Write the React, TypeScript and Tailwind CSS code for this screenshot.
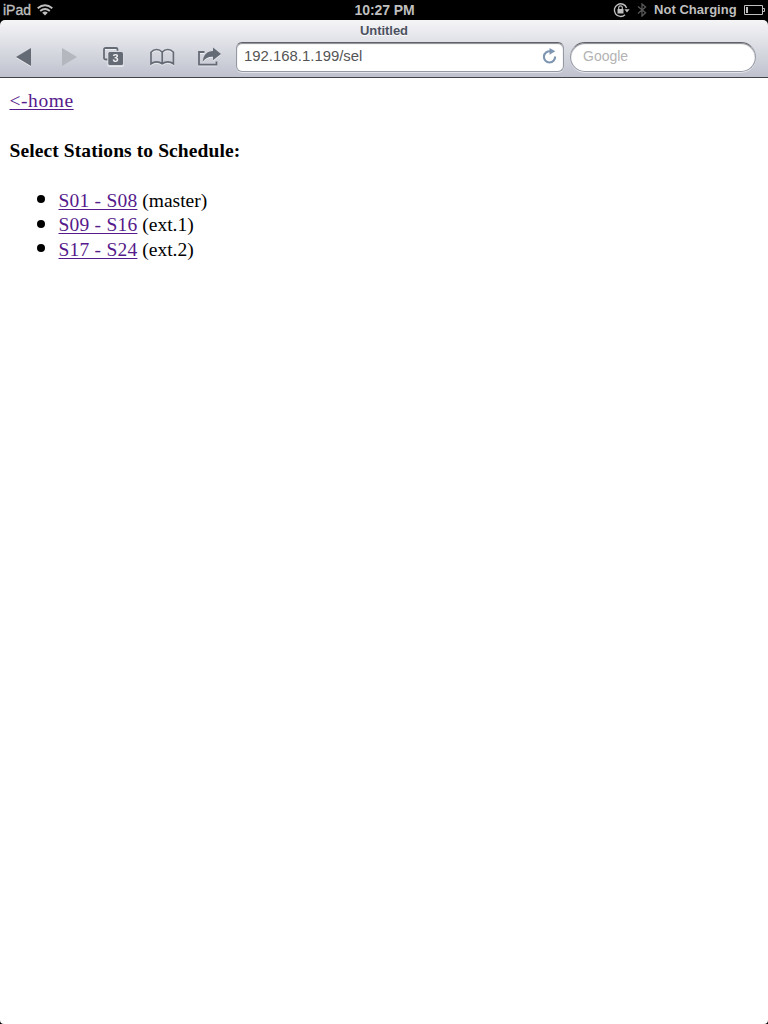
import React from 'react';

const stations = [
  { range: 'S01 - S08', unit: '(master)' },
  { range: 'S09 - S16', unit: '(ext.1)' },
  { range: 'S17 - S24', unit: '(ext.2)' },
];

function StatusBar() {
  return (
    <div className="grid h-5 shrink-0 grid-cols-3 items-center bg-black font-bold text-[#bfbfbf]">
      <div className="flex items-center pl-[3px]">
        <span className="w-[28px] whitespace-nowrap text-[14px] leading-5 font-normal [-webkit-text-stroke:0.35px_#bfbfbf]">iPad</span>
        <svg className="ml-[6px]" width="16" height="12" viewBox="0 0 16 12" fill="none" stroke="#bfbfbf" strokeWidth="1.9">
          <path d="M.7 4.3Q8-2 15.3 4.3M3.2 7Q8 3 12.8 7" />
          <path d="M5.2 8.7Q8 6.4 10.8 8.7L8 11.5Z" fill="#bfbfbf" stroke="none" />
        </svg>
      </div>
      <span className="pl-px text-center text-[14px] leading-5 tracking-[-0.1px]">10:27 PM</span>
      <div className="flex items-center justify-end pr-[3px]">
        <svg width="17" height="16" viewBox="0 0 17 16" fill="none">
          <path d="M13.6 6A6.3 6.3 0 1 0 12 12.7" stroke="#bfbfbf" strokeWidth="1.4" />
          <path d="M11.4 7.3h5.2L14 10.6Z" fill="#bfbfbf" />
          <path d="M4.5 7h6v4.5h-6Z" fill="#bfbfbf" />
          <path d="M5.7 7.5V5.6a1.8 1.8 0 0 1 3.6 0v1.9" stroke="#bfbfbf" strokeWidth="1.2" />
        </svg>
        <svg className="ml-[7px]" width="10" height="14" viewBox="0 0 10 14" fill="none" stroke="#595959" strokeWidth="1.3">
          <path d="m1 3.6 7.6 6.2L5 13V1l3.6 3.1L1 10.4" />
        </svg>
        <span className="ml-[7px] w-[83px] whitespace-nowrap text-[13px] leading-5 tracking-[0.03px]">Not Charging</span>
        <svg className="ml-[7px]" width="21" height="10" viewBox="0 0 21 10" fill="none">
          <path d="M.5.5h18v9H.5ZM18.5 3.5h2v3h-2" stroke="#bfbfbf" />
          <path d="M2 2h2v6H2Z" fill="#bfbfbf" />
        </svg>
      </div>
    </div>
  );
}

function Toolbar() {
  return (
    <div className="bg-black">
      <header className="h-[58px] rounded-t-[5px] border-b border-[#434347] bg-linear-to-b from-[#f5f5f7] to-[#bfc2ce]">
        <div className="h-[21px] text-center text-[13px] leading-[21px] font-bold tracking-[-0.05px] text-[#4b5060] [text-shadow:0_1px_0_white]">Untitled</div>
        <div className="flex h-[31px] items-center">
          <svg className="ml-4 shrink-0 drop-shadow-[0_1px_0_#ffffff90]" width="16" height="18" viewBox="0 0 16 18">
            <path d="M0 9 15 0v18Z" fill="#656b75" />
          </svg>
          <svg className="ml-[30px] shrink-0" width="16" height="18" viewBox="0 0 16 18">
            <path d="m0 0 15 9-15 9Z" fill="#b4b7be" />
          </svg>
          <div className="ml-[25px] grid shrink-0 items-center drop-shadow-[0_1px_0_#ffffff90]">
            <svg className="col-start-1 row-start-1" width="21" height="19" viewBox="0 0 21 19">
              <rect x="1" y="1" width="13.5" height="11.5" rx="1.5" fill="none" stroke="#656b75" strokeWidth="1.8" />
              <rect x="4.3" y="3.8" width="16.7" height="15.2" rx="2" fill="#d8dae1" />
              <rect x="5.3" y="5" width="14.7" height="13" rx="1.5" fill="#656b75" />
            </svg>
            <span className="col-start-1 row-start-1 pt-[4px] pl-[4px] text-center text-[11px] leading-none font-bold text-[#eeeff2]">3</span>
          </div>
          <svg className="ml-[26px] shrink-0 drop-shadow-[0_1px_0_#ffffff90]" width="25" height="18" viewBox="0 0 25 18" fill="none" stroke="#656b75" strokeWidth="1.7">
            <path d="M12.2 4.2Q9.8 1.5 6.6 1.5T1 4.2V15.7Q3.5 13.8 6.6 13.8T12.2 15.7Q14.7 13.8 17.8 13.8T23.4 15.7V4.2Q21 1.5 17.8 1.5T12.2 4.2V15.5" />
          </svg>
          <svg className="ml-[23px] shrink-0 drop-shadow-[0_1px_0_#ffffff90]" width="24" height="20" viewBox="0 0 24 20">
            <path d="M6.5 5H1v12.7h17.5V14.5" fill="none" stroke="#656b75" strokeWidth="1.8" />
            <path d="M15 .5 23 6.9l-8 6.4V9.8C10.5 9.5 7.8 11 4.7 14.7 5.4 7.5 9.3 4.3 15 4Z" fill="#656b75" />
          </svg>
          <div className="ml-[14px] flex h-[30px] w-[328px] shrink-0 items-center justify-between rounded-[6px] border border-[#9599a3] border-t-[#5f6168] bg-white pr-[6px] pl-[7px] shadow-[inset_0_1px_1px_#8b8c90,0_1px_0_#e4e5eb]">
            <span className="pb-[2px] text-[14.9px] leading-[26px] text-[#555]">192.168.1.199/sel</span>
            <svg className="mb-px" width="15" height="16" viewBox="0 0 15 16" fill="none">
              <path d="M8.5 3.4A5.6 5.6 0 1 0 13.1 8.5" stroke="#7e95b1" strokeWidth="2.1" />
              <path d="m7.5 0 5.8 3.3-5.8 3.5Z" fill="#7e95b1" />
            </svg>
          </div>
          <div className="ml-[6px] flex h-[30px] w-[186px] shrink-0 items-center rounded-full border border-[#9599a3] border-t-[#5f6168] bg-white pl-3 shadow-[inset_0_1px_1px_#8b8c90,0_1px_0_#e4e5eb]">
            <span className="pb-[2px] text-[14px] leading-[26px] text-[#b3b3b3]">Google</span>
          </div>
        </div>
      </header>
    </div>
  );
}

export default function App() {
  return (
    <div className="h-[1024px] w-[768px] overflow-hidden bg-black font-['Liberation_Sans',sans-serif]">
      <div className="flex h-full flex-col overflow-hidden rounded-b-[4px] bg-white">
        <StatusBar />
        <Toolbar />
        <main className="pt-[11px] pl-[9.5px] font-['Liberation_Serif',serif] text-[19.5px] leading-[24.5px] text-black">
          <a href="#" className="inline-block tracking-[0.55px] text-[#551a8b] underline decoration-1 underline-offset-2">&lt;-home</a>
          <h1 className="mt-[25px] text-[19.5px] font-bold tracking-[0.1px]">Select Stations to Schedule:</h1>
          <ul className="mt-[25.7px]">
            {stations.map((station) => (
              <li key={station.range} className="flex items-center">
                <span className="mr-[13.5px] mb-[3px] ml-[27.5px] size-2 rounded-full bg-black" />
                <span className="whitespace-pre"><a href="#" className="tracking-[0.22px] text-[#551a8b] underline decoration-1 underline-offset-2">{station.range}</a> {station.unit}</span>
              </li>
            ))}
          </ul>
        </main>
      </div>
    </div>
  );
}
